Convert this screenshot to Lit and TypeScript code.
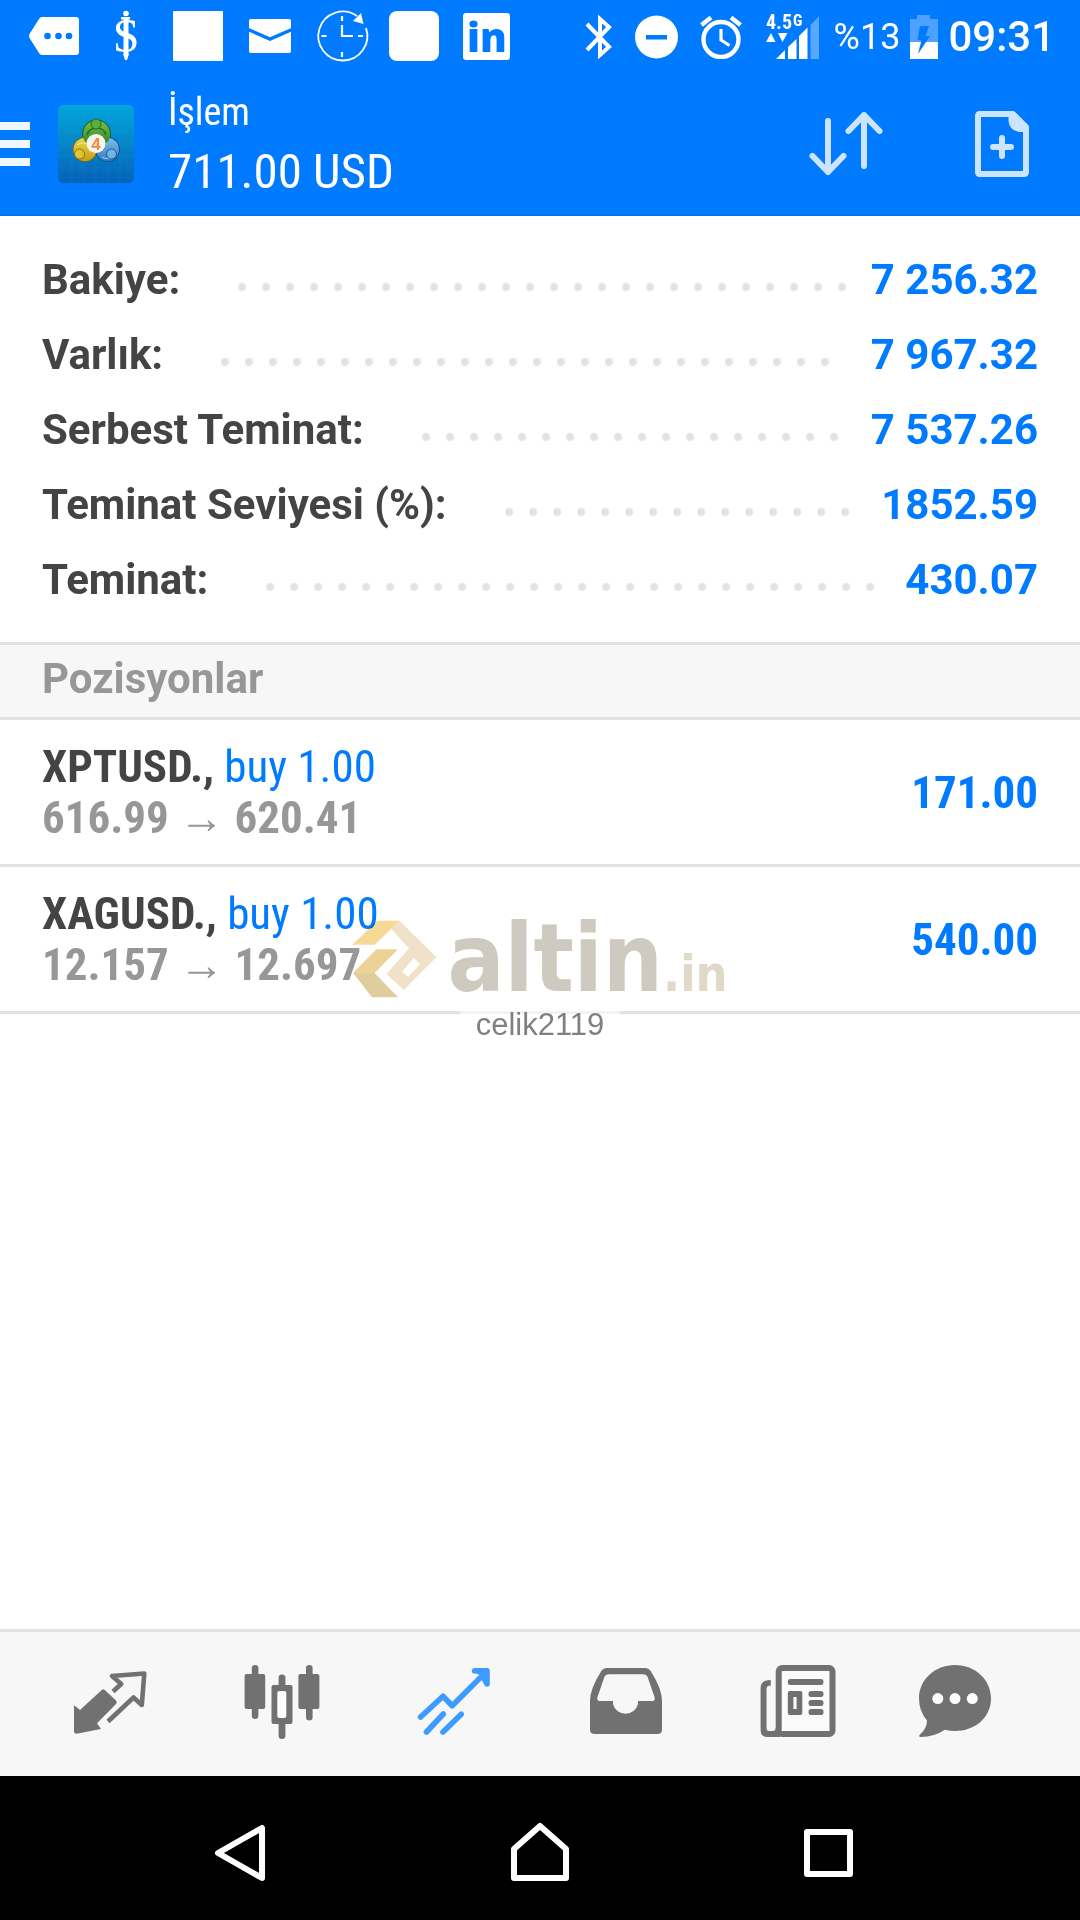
import { LitElement, html, css, svg } from "lit";
import { customElement } from "lit/decorators.js";

const summary = [
  { label: "Bakiye:", value: "7 256.32" },
  { label: "Varlık:", value: "7 967.32" },
  { label: "Serbest Teminat:", value: "7 537.26" },
  { label: "Teminat Seviyesi (%):", value: "1852.59" },
  { label: "Teminat:", value: "430.07" },
];

const positions = [
  { symbol: "XPTUSD.,", side: "buy 1.00", open: "616.99", current: "620.41", profit: "171.00" },
  { symbol: "XAGUSD.,", side: "buy 1.00", open: "12.157", current: "12.697", profit: "540.00" },
];

const tabs = [
  {
    name: "Quotes",
    icon: svg`
      <path d="M4.5 43.5 10 48 31.5 28.2Q33.3 26.5 35 28.2L46 38.6Q47.6 40.3 46 42L27 61.3 31 67 6.5 71.7Q4 71.7 4 69.5V44Z" fill="currentColor"/>
      <path d="M43 29.5 51.2 22 42 14 74.3 11.5 71.8 43 63.5 35.5 38 59.5" fill="none" stroke="currentColor" stroke-width="4.6" stroke-linejoin="round"/>`,
  },
  {
    name: "Chart",
    icon: svg`
      <g fill="currentColor">
        <rect x="2.6" y="12" width="20.6" height="35" rx="2"/><rect x="9.8" y="3" width="6.6" height="54" rx="3.3"/>
        <rect x="29.5" y="23" width="21" height="39" rx="2"/><rect x="36.6" y="12.5" width="6.8" height="64.5" rx="3.3"/>
        <rect x="56.4" y="12" width="21" height="35" rx="2"/><rect x="64" y="3" width="6.6" height="55.5" rx="3.3"/>
      </g>
      <rect x="35.3" y="29" width="9" height="27" rx="2" fill="#fdfdfd"/>`,
  },
  {
    name: "Trade",
    active: true,
    icon: svg`
      <g fill="none" stroke="currentColor" stroke-width="5.6" stroke-linecap="round" stroke-linejoin="round">
        <path d="M6.6 55 29 34.2 38.2 43.8 71 11"/><path d="M29.3 52 12.5 70"/><path d="M47.2 52.3 29 70"/>
        <path d="M60.6 8.8H73V22L66 9.5Z" fill="currentColor"/>
      </g>`,
  },
  {
    name: "History",
    icon: svg`
      <path fill="currentColor" fill-rule="evenodd" d="M21 6H59Q63 6 65 9.5Q76 27 76 39V67.5Q76 72 71.5 72H8.5Q4 72 4 67.5V39Q4 27 15 9.5Q17 6 21 6ZM23 12.3Q19.5 12.3 18.2 15.5L11.5 35Q10.5 38.7 13.5 39H27V42A12.8 12.3 0 0 0 52 42V39H66.5Q69.5 38.7 68.5 35L61.8 15.5Q60.5 12.3 57 12.3Z"/>`,
  },
  {
    name: "News",
    icon: svg`
      <rect x="20.7" y="6" width="53.8" height="66" rx="3.5" fill="#fbfbfb" stroke="currentColor" stroke-width="6"/>
      <path d="M12.8 18V23.5Q8.5 23.5 8.5 27V66Q8.5 69 11 69H14.5Q17.8 69 17.8 66H22V75H9Q2.6 75 2.6 68V26Q2.6 18 12.8 18Z" fill="currentColor"/>
      <g fill="currentColor">
        <rect x="29.8" y="17" width="35.6" height="6" rx="2.5"/><rect x="50.5" y="29" width="15" height="6" rx="2.8"/>
        <rect x="50.5" y="38" width="15" height="6" rx="2.8"/><rect x="50.5" y="47" width="15" height="6" rx="2.8"/>
        <rect x="29.8" y="29" width="14.5" height="24" rx="2"/>
      </g>
      <rect x="35.4" y="35" width="3.2" height="12" fill="#fbfbfb"/>`,
  },
  {
    name: "Messages",
    icon: svg`
      <path d="M40 3C60 3 76 17.5 76 36.5S60 69 40 69Q35 69 30 67.8Q19 75 6 75Q2.5 74.5 5.5 72Q12 66 12 58.5Q4 49 4 36.5C4 17.5 20 3 40 3Z" fill="currentColor"/>
      <g fill="#fdfdfd"><circle cx="22.8" cy="36.6" r="5.5"/><circle cx="40" cy="36.6" r="5.5"/><circle cx="57.3" cy="36.6" r="5.5"/></g>`,
  },
];

@customElement("app-root")
export class AppRoot extends LitElement {
  static styles = css`
    :host {
      display: flex;
      flex-direction: column;
      min-height: 100vh;
      background: #fff;
      color: #444;
      font-family: Roboto, "Liberation Sans", sans-serif;
    }
    * { box-sizing: border-box; }
    svg { display: block; flex: none; }
    button, .tab { border: 0; padding: 0; background: none; color: inherit; cursor: pointer; }
    h1, h2, p, dl, dt, dd, ul { margin: 0; padding: 0; }
    ul { list-style: none; }

    .status {
      display: flex;
      justify-content: space-between;
      align-items: center;
      height: 72px;
      padding: 0 25px 0 18px;
      background: #007aff;
      color: #fff;
    }
    .notices { display: flex; }
    .system { display: flex; align-items: center; gap: 14px; padding-top: 2px; }
    .radios { display: flex; align-items: center; gap: 22px; }
    .power { display: flex; align-items: center; gap: 10px; }
    .percent { font-size: 36px; line-height: 72px; }
    .clock { font-size: 42px; font-weight: 500; line-height: 72px; }
    .dollar { font: 400 48px "Liberation Serif", serif; }
    .linked { font: 800 40px "Open Sans", sans-serif; }
    .network { font: 700 20px "Roboto Condensed", Roboto, sans-serif; }
    .network-unit { font: 700 16px "Roboto Condensed", Roboto, sans-serif; }
    .badge { font: 700 17px "Liberation Sans", sans-serif; }

    .header {
      display: flex;
      align-items: center;
      height: 144px;
      padding-right: 38px;
      background: #007aff;
      box-shadow: inset 0 -2px #0070ec;
      color: #fff;
      font-family: "Roboto Condensed", Roboto, sans-serif;
    }
    .logo { margin: 0 34px 0 28px; }
    .titles { flex: 1; padding-bottom: 4px; }
    .title { font-size: 38px; font-weight: 400; line-height: 60px; }
    .balance { font-size: 49px; line-height: 60px; }
    .actions { display: flex; gap: 76px; color: #cce4ff; }

    .summary { padding: 26px 42px 25px; }
    .line {
      display: flex;
      align-items: center;
      font-size: 42px;
      font-weight: 700;
      line-height: 75px;
    }
    .leader { flex: 1; margin: 0 6px 0 58px; }
    .dots {
      width: round(down, 100%, 24px);
      height: 75px;
      background: radial-gradient(circle at 4px 45px, #e2e2e2 3px, transparent 5px) 0 0 / 24px 75px repeat-x;
    }
    .amount { color: #007aff; }

    .section {
      padding: 0 42px 4px;
      border: solid #e2e2e2;
      border-width: 3px 0;
      background: #f7f7f7;
      color: #97979a;
      font-size: 42px;
      font-weight: 700;
      line-height: 68px;
    }

    .positions {
      position: relative;
      font-family: "Roboto Condensed", Roboto, sans-serif;
      font-size: 45px;
      line-height: 51px;
    }
    .position {
      display: flex;
      align-items: center;
      justify-content: space-between;
      padding: 21px 42px;
      border-bottom: 3px solid #e2e2e2;
      font-weight: 700;
    }
    .side { color: #007aff; font-weight: 400; }
    .prices { color: #979797; }

    .watermark {
      position: absolute;
      top: 191px;
      left: 0;
      right: 0;
      display: flex;
      flex-direction: column;
      align-items: center;
      pointer-events: none;
    }
    .brand {
      display: flex;
      align-items: center;
      gap: 10px;
      mix-blend-mode: multiply;
      color: #cfcabf;
      font: 700 94px "DejaVu Sans Condensed", "DejaVu Sans", sans-serif;
      line-height: 96px;
    }
    .tld { color: #e0d9c8; font-size: 50px; line-height: 1; }
    .user {
      padding: 0 16px;
      background: rgba(255, 255, 255, 0.6);
      color: #808080;
      font: 31px "Liberation Sans", Arial, sans-serif;
    }

    .tabs {
      display: grid;
      grid-template-columns: repeat(5, 6fr) 5fr;
      margin-top: auto;
      padding: 0 53px 0 24px;
      border-top: 3px solid #e2e2e2;
      background: #f7f7f7;
      color: #717171;
    }
    .tab { display: flex; justify-content: center; padding: 30px 0 34px; }
    .tab.active { color: #3d9bff; }

    .keys {
      display: grid;
      grid-template-columns: repeat(3, 1fr);
      justify-items: center;
      padding: 32px 99px;
      background: #000;
      color: #fff;
    }
  `;

  private renderStatus() {
    return html`
      <div class="status">
        <div class="notices">
          <svg width="72" height="72" viewBox="0 0 72 72"><path d="M24 17H58Q61 17 61 20V52Q61 55 58 55H24Q22 55 21 53L11.5 38Q10.5 36 11.5 34L21 19Q22 17 24 17Z" fill="#fff"/><g fill="#007aff"><circle cx="29.5" cy="36" r="3.3"/><circle cx="40.5" cy="36" r="3.3"/><circle cx="51" cy="36" r="3.3"/></g></svg>
          <svg width="72" height="72" viewBox="0 0 72 72" fill="#fff"><text class="dollar" x="36" y="52" text-anchor="middle">S</text><rect x="33.5" y="17" width="5" height="37"/><rect x="31" y="17" width="9" height="2.5"/><circle cx="36" cy="13.5" r="2.8"/><path d="M33 54H39L37 60H35Z"/></svg>
          <svg width="72" height="72" viewBox="0 0 72 72"><rect x="11" y="11" width="50" height="50" rx="1" fill="#fff"/></svg>
          <svg width="72" height="72" viewBox="0 0 72 72"><rect x="15" y="19" width="42" height="34" rx="2" fill="#fff"/><path d="M14 29.5 36 39 58 29.5" fill="none" stroke="#007aff" stroke-width="3.5"/></svg>
          <svg width="72" height="72" viewBox="0 0 72 72" fill="none" stroke="#fff" stroke-width="1.8"><path d="M60 28A24.5 24.5 0 1 1 51 16"/><path d="M36 25V36H47M36 16V21M36 52V57M15.5 36H20.5M52 36H57" stroke-width="2.2"/><path d="M55 13 57.5 24 47 21Z" fill="#fff" stroke="none"/></svg>
          <svg width="72" height="72" viewBox="0 0 72 72"><rect x="11" y="11" width="50" height="50" rx="8" fill="#fff"/></svg>
          <svg width="72" height="72" viewBox="0 0 72 72"><rect x="13" y="13" width="47" height="47" rx="3" fill="#fff"/><text class="linked" x="37" y="52" text-anchor="middle" fill="#007aff">in</text></svg>
        </div>
        <div class="system">
          <div class="radios">
            <svg width="28" height="44" viewBox="0 0 28 44" fill="none" stroke="#fff" stroke-width="4"><path d="M2 9 24 32 15 40V4L24 12 2 35"/></svg>
            <svg width="43" height="44" viewBox="0 0 43 44"><circle cx="21.5" cy="22" r="21.5" fill="#fff"/><rect x="11" y="20" width="21" height="4.5" fill="#007aff"/></svg>
            <svg width="42" height="44" viewBox="0 0 42 44" fill="none" stroke="#fff"><circle cx="21" cy="24.5" r="17.5" stroke-width="4.4"/><path d="M21 14V25L29.5 30.500" stroke-width="3.2"/><path d="M1.5 10 11 2.5M31 2.5 40.5 10" stroke-width="4.4"/></svg>
            <svg width="56" height="66" viewBox="-2 -10 56 66" fill="#fff"><text class="network" x="0" y="15">4.5</text><text class="network-unit" x="27" y="12">G</text><path d="M0 28 5 19 9.5 28ZM12 19H21.5L16.5 28Z"/><path d="M10 45 19 36V45ZM22 33 30.5 25V45H22ZM33 22 41.5 13.5V45H33Z"/><path d="M44.5 11 53 2.5V45H44.5Z" opacity="0.350"/></svg>
          </div>
          <div class="power">
            <span class="percent">%13</span>
            <svg width="28" height="46" viewBox="0 0 28 46"><path d="M0 5H7V1H20V5H28V45H0Z" fill="#4da2ff"/><rect y="28" width="28" height="17" fill="#fff"/><path d="M10 12H19L15.5 22H20L8 40 11.5 26H7.5Z" fill="#007aff"/></svg>
            <span class="clock">09:31</span>
          </div>
        </div>
      </div>
    `;
  }

  private renderHeader() {
    return html`
      <header class="header">
        <button aria-label="Menu">
          <svg width="30" height="44" viewBox="0 0 30 44" fill="#f0f8ff"><rect width="30" height="8"/><rect y="18" width="30" height="8"/><rect y="36" width="30" height="8"/></svg>
        </button>
        <svg class="logo" width="76" height="78" viewBox="0 0 76 78">
          <defs>
            <linearGradient id="tile" x2="0" y2="1"><stop stop-color="#00a6dc"/><stop offset="0.5" stop-color="#0585c9"/><stop offset="1" stop-color="#0561b8"/></linearGradient>
            <linearGradient id="green" x2="0" y2="1"><stop stop-color="#7cc243"/><stop offset="1" stop-color="#2f8a2f"/></linearGradient>
            <linearGradient id="gold" x2="0" y2="1"><stop stop-color="#e6dc4a"/><stop offset="1" stop-color="#c99b16"/></linearGradient>
            <linearGradient id="sky" x2="0" y2="1"><stop stop-color="#7fc0ea"/><stop offset="1" stop-color="#2c7cc4"/></linearGradient>
          </defs>
          <rect width="76" height="78" rx="5" fill="url(#tile)"/>
          <path d="M14 0V78M26 0V78M38 0V78M50 0V78M62 0V78M0 15H76M0 27H76M0 39H76M0 51H76M0 63H76" stroke="#38b6e6" stroke-width="0.6" opacity="0.2"/>
          <circle cx="38.500" cy="29" r="14.500" fill="#1d5f2b"/><circle cx="27" cy="44.500" r="12.500" fill="#776a14"/><circle cx="49.500" cy="44.500" r="12.500" fill="#1a4f86"/>
          <circle cx="27" cy="44.500" r="11.500" fill="url(#gold)"/><circle cx="49.500" cy="44.500" r="11.500" fill="url(#sky)"/>
          <path d="M25 29A13.500 13.500 0 0 1 52 29Q52 36 48 38H29Q25 36 25 29Z" fill="url(#green)"/>
          <path d="M29 30Q31 23 38.500 23T48 30" fill="none" stroke="#23702a" stroke-width="1.600"/>
          <path d="M19 40Q25 36 30 40M44 52Q52 56 58 50" fill="none" stroke="#fff" stroke-width="1.200" opacity="0.500"/>
          <circle cx="38" cy="19" r="5" fill="#5fae3c" stroke="#1f6a2a"/>
          <circle cx="21.500" cy="49" r="5" fill="#dfc530" stroke="#8a7212"/>
          <circle cx="53.500" cy="49" r="5" fill="#6fb4e6" stroke="#1c5c98"/>
          <circle cx="38" cy="38.500" r="9.500" fill="#f7f4f0"/>
          <text class="badge" x="38" y="44.500" text-anchor="middle" fill="#f08a3c">4</text>
        </svg>
        <div class="titles">
          <h1 class="title">İşlem</h1>
          <p class="balance">711.00 USD</p>
        </div>
        <div class="actions">
          <button aria-label="Sort">
            <svg width="80" height="80" viewBox="0 0 80 80" fill="none" stroke="currentColor" stroke-width="6" stroke-linecap="round" stroke-linejoin="round"><path d="M22 17V68M6.5 52 22 68 37.5 52M58 62V11M42.5 27 58 11 73.5 27"/></svg>
          </button>
          <button aria-label="New order">
            <svg width="80" height="80" viewBox="0 0 80 80" fill="none" stroke="currentColor" stroke-width="6" stroke-linejoin="round"><path d="M18 10H51L64 23V68Q64 70 62 70H18Q16 70 16 68V12Q16 10 18 10Z"/><path d="M46.5 10V17Q47.5 27 58 28H64V23L51 10Z" fill="currentColor" stroke="none"/><path d="M40 34V52M31 43H49" stroke-linecap="round"/></svg>
          </button>
        </div>
      </header>
    `;
  }

  private renderWatermark() {
    return html`
      <div class="watermark">
        <div class="brand">
          <svg width="85" height="80" viewBox="27 20 255 240">
            <path d="M103 25H170L150 45 95 97H28Z" fill="#f6d995"/>
            <path d="M100 111H165L95 182H30Z" fill="#ecd296"/>
            <path d="M30 182H95L165 255H87Z" fill="#e0cd9d"/>
            <path d="M170 25 280 135 182 233 130 185 198 108 145 50ZM177 178 195 193 231 156 212 137Z" fill="#efe2c8" fill-rule="evenodd"/>
          </svg>
          <span>altin<span class="tld">.in</span></span>
        </div>
        <p class="user">celik2119</p>
      </div>
    `;
  }

  render() {
    return html`
      ${this.renderStatus()} ${this.renderHeader()}
      <main>
        <dl class="summary">
          ${summary.map(
            (row) => html`
              <div class="line">
                <dt>${row.label}</dt>
                <div class="leader"><div class="dots"></div></div>
                <dd class="amount">${row.value}</dd>
              </div>
            `
          )}
        </dl>
        <h2 class="section">Pozisyonlar</h2>
        <div class="positions">
          <ul>
            ${positions.map(
              (p) => html`
                <li class="position">
                  <div>
                    <p>${p.symbol} <span class="side">${p.side}</span></p>
                    <p class="prices">${p.open} → ${p.current}</p>
                  </div>
                  <span class="amount">${p.profit}</span>
                </li>
              `
            )}
          </ul>
          ${this.renderWatermark()}
        </div>
      </main>
      <nav class="tabs">
        ${tabs.map(
          (t) => html`
            <button class="tab ${t.active ? "active" : ""}" aria-label=${t.name}>
              <svg width="80" height="80" viewBox="0 0 80 80">${t.icon}</svg>
            </button>
          `
        )}
      </nav>
      <div class="keys">
        <button aria-label="Back">
          <svg width="80" height="80" viewBox="0 0 80 80" fill="none" stroke="currentColor" stroke-width="6" stroke-linejoin="round"><path d="M56 20V70L12 45Z"/></svg>
        </button>
        <button aria-label="Home">
          <svg width="80" height="80" viewBox="0 0 80 80" fill="none" stroke="currentColor" stroke-width="6" stroke-linejoin="round"><path d="M40 18 66 41V70H14V41Z"/></svg>
        </button>
        <button aria-label="Recent apps">
          <svg width="80" height="80" viewBox="0 0 80 80" fill="none" stroke="currentColor" stroke-width="6" stroke-linejoin="round"><path d="M13 24H56V66H13Z"/></svg>
        </button>
      </div>
    `;
  }
}
